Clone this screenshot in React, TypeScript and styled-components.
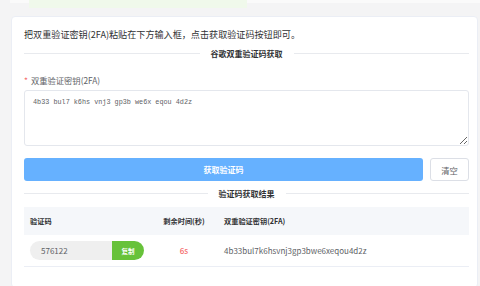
import React from "react";
import styled, { createGlobalStyle } from "styled-components";

const GlobalStyle = createGlobalStyle`
  body {
    margin: 0;
    background: #f4f4f5;
    font-family: "Noto Sans CJK SC", "Noto Sans", sans-serif;
  }
`;

const SECRET = "4b33 bul7 k6hs vnj3 gp3b we6x eqou 4d2z";

function App() {
  return (
    <Page>
      <GlobalStyle />
      <TopStrip>
        <SuccessBox />
      </TopStrip>
      <Card>
        <Intro>把双重验证密钥(2FA)粘贴在下方输入框，点击获取验证码按钮即可。</Intro>
        <Divider>
          <span>谷歌双重验证码获取</span>
        </Divider>
        <Label>
          <Star>*</Star>双重验证密钥(2FA)
        </Label>
        <SecretInput readOnly value={SECRET} />
        <ButtonRow>
          <PrimaryButton>获取验证码</PrimaryButton>
          <PlainButton>清空</PlainButton>
        </ButtonRow>
        <Divider>
          <span>验证码获取结果</span>
        </Divider>
        <Table>
          <HeadCell>验证码</HeadCell>
          <HeadCell center>剩余时间(秒)</HeadCell>
          <HeadCell>双重验证密钥(2FA)</HeadCell>

          <BodyCell>
            <CodeGroup>
              <CodeValue>576122</CodeValue>
              <CopyButton>复制</CopyButton>
            </CodeGroup>
          </BodyCell>
          <BodyCell center>
            <Countdown>6s</Countdown>
          </BodyCell>
          <BodyCell>4b33bul7k6hsvnj3gp3bwe6xeqou4d2z</BodyCell>
        </Table>
      </Card>
    </Page>
  );
}

export default App;

const Page = styled.div`
  min-height: 286px;
`;

const TopStrip = styled.div`
  height: 8px;
  margin-left: 10px;
  padding-left: 19px;
  background: linear-gradient(#fafafa 0 3px, transparent 3px);
`;

const SuccessBox = styled.div`
  width: 218px;
  height: 8px;
  background: #f0f9eb;
`;

const Card = styled.div`
  margin: 8px 2px 0 11px;
  padding: 10px 8px 20px 12px;
  background: #fff;
  border: 1px solid #ebeef5;
  border-radius: 4px;
`;

const Intro = styled.div`
  font-size: 9.1px;
  line-height: 14px;
  color: #303133;
`;

const Divider = styled.div`
  display: flex;
  align-items: center;
  height: 12px;
  margin-top: 6px;
  &::before,
  &::after {
    content: "";
    flex: 1;
    height: 1px;
    background: #e8eaee;
  }
  span {
    padding: 0 11px;
    font-size: 8px;
    font-weight: 700;
    color: #303133;
  }
`;

const Label = styled.div`
  margin-top: 15px;
  font-size: 8.3px;
  line-height: 12px;
  color: #606266;
`;

const Star = styled.span`
  color: #f56c6c;
  margin-right: 3px;
`;

const SecretInput = styled.textarea`
  display: block;
  box-sizing: border-box;
  width: 100%;
  height: 56px;
  margin-top: 4px;
  padding: 6px 8px;
  border: 1px solid #e4e7ed;
  border-radius: 3px;
  font-family: "Liberation Mono", monospace;
  font-size: 6.8px;
  line-height: 10px;
  color: #606266;
  outline: none;
`;

const ButtonRow = styled.div`
  display: flex;
  gap: 7px;
  margin-top: 12px;
`;

const PrimaryButton = styled.button`
  flex: 1;
  height: 23px;
  border: none;
  border-radius: 3px;
  background: #66b1ff;
  color: #fff;
  font-family: inherit;
  font-size: 8px;
  font-weight: 700;
`;

const PlainButton = styled.button`
  width: 39px;
  height: 23px;
  border: 1px solid #dcdfe6;
  border-radius: 3px;
  background: #fff;
  color: #606266;
  font-family: inherit;
  font-size: 8.3px;
`;

const Table = styled.div`
  display: grid;
  grid-template-columns: 126px 68px 1fr;
  margin-top: 8px;
`;

const HeadCell = styled.div<{ center?: boolean }>`
  display: flex;
  align-items: center;
  justify-content: ${(p) => (p.center ? "center" : "flex-start")};
  height: 28px;
  padding-left: ${(p) => (p.center ? "0" : "6px")};
  background: #f5f7fa;
  font-size: 7.2px;
  font-weight: 700;
  color: #303133;
`;

const BodyCell = styled.div<{ center?: boolean }>`
  display: flex;
  align-items: center;
  justify-content: ${(p) => (p.center ? "center" : "flex-start")};
  height: 31px;
  padding-left: ${(p) => (p.center ? "0" : "6px")};
  border-bottom: 1px solid #ebeef5;
  font-size: 8px;
  color: #606266;
`;

const CodeGroup = styled.div`
  display: flex;
  height: 19px;
`;

const CodeValue = styled.div`
  display: flex;
  align-items: center;
  width: 71px;
  padding-left: 11px;
  background: #efefef;
  border-radius: 10px 0 0 10px;
  font-size: 8px;
  color: #606266;
`;

const CopyButton = styled.div`
  display: flex;
  align-items: center;
  justify-content: center;
  width: 32px;
  background: #67c23a;
  border-radius: 0 10px 10px 0;
  color: #fff;
  font-size: 6.5px;
  font-weight: 700;
`;

const Countdown = styled.span`
  color: #f56c6c;
  font-weight: 500;
`;
